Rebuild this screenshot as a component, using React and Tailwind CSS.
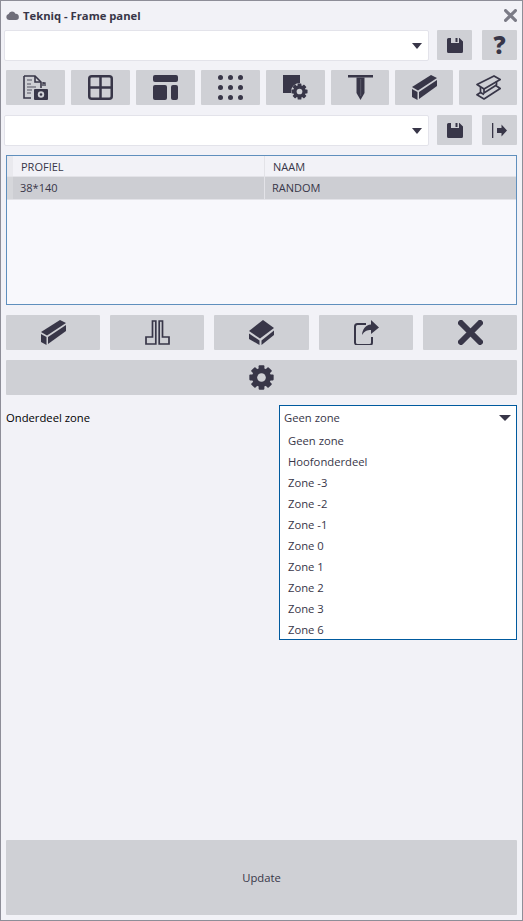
const dark = '#383648';

function Svg({ w = 25, h = 25, children }) {
  return (
    <svg width={w} height={h} viewBox={`0 0 ${w} ${h}`} className="block">
      {children}
    </svg>
  );
}

function Gear({ cx, cy, r, hole = '#cfd0d5' }) {
  const teeth = [0, 45, 90, 135];
  return (
    <g fill={dark}>
      {teeth.map((a) => (
        <rect key={a} x={cx - r * 0.28} y={cy - r * 1.18} width={r * 0.56} height={r * 2.36} rx={r * 0.08} transform={`rotate(${a} ${cx} ${cy})`} />
      ))}
      <circle cx={cx} cy={cy} r={r * 0.92} />
      <circle cx={cx} cy={cy} r={r * 0.42} fill={hole} />
    </g>
  );
}

function SaveIcon() {
  return (
    <Svg w={16} h={15}>
      <path d="M1.5 0H4V5H12V0H12.5L16 3.5V13.5A1.5 1.5 0 0 1 14.5 15H1.5A1.5 1.5 0 0 1 0 13.5V1.5A1.5 1.5 0 0 1 1.5 0Z" fill={dark} />
      <rect x="8.5" y="0" width="2" height="4" fill={dark} />
    </Svg>
  );
}

function DocIcon() {
  return (
    <Svg w={25} h={25}>
      <path d="M1 1H12L18 7V13M1 1V23H8" fill="none" stroke={dark} strokeWidth="1.6" />
      <path d="M12 1V7H18" fill="none" stroke={dark} strokeWidth="1.6" />
      <path d="M4 5H9M4 9H8M4 12H13M4 15H9M4 18H8" stroke="#7d7c88" strokeWidth="1.5" />
      <path d="M20 7V11M20 8H22V11" fill="none" stroke={dark} strokeWidth="1.3" />
      <rect x="11" y="14" width="14" height="11" rx="1" fill={dark} />
      <circle cx={18} cy={19.5} r={3.2} fill="#cfd0d5" />
      <circle cx={18} cy={19.5} r={1.3} fill={dark} />
    </Svg>
  );
}

function GridIcon() {
  return (
    <Svg w={25} h={25}>
      <rect x="1.25" y="1.25" width="22.5" height="22.5" rx="2.5" fill="none" stroke={dark} strokeWidth="2.5" />
      <path d="M12.5 1V24M1 12.5H24" stroke={dark} strokeWidth="2.5" />
    </Svg>
  );
}

function LayoutIcon() {
  return (
    <Svg w={25} h={25}>
      <rect x="0" y="0" width="25" height="7" rx="2" fill={dark} />
      <rect x="0" y="10" width="14" height="15" rx="2" fill={dark} />
      <rect x="18" y="10" width="7" height="15" rx="2" fill={dark} />
    </Svg>
  );
}

function DotsIcon() {
  const pos = [2.5, 12.5, 22.5];
  return (
    <Svg w={25} h={25}>
      {pos.map((y) => pos.map((x) => <circle key={`${x}-${y}`} cx={x} cy={y} r="2.5" fill={dark} />))}
    </Svg>
  );
}

function SquareGearIcon() {
  return (
    <Svg w={25} h={25}>
      <path d="M0 0H17V8A9 9 0 0 0 8 16V18H0Z" fill={dark} />
      <Gear cx={16.5} cy={16.5} r={6.8} />
    </Svg>
  );
}

function NailIcon() {
  return (
    <Svg w={25} h={25}>
      <rect x="0" y="0" width="25" height="2.5" fill={dark} />
      <path d="M8.5 2.5H16.5V18L12.5 25L8.5 18Z" fill={dark} />
      <path d="M12.7 4V21" stroke="#5c5b6a" strokeWidth="1" />
    </Svg>
  );
}

function BeamIcon() {
  return (
    <Svg w={25} h={25}>
      <path d="M0 12L19 0L25 3L6 15.5Z" fill={dark} />
      <path d="M7 17L25 5V11L7 24Z" fill={dark} />
      <path d="M0 14L5.5 17V25L0 22Z" fill={dark} />
    </Svg>
  );
}

function IBeamIcon() {
  return (
    <Svg w={25} h={25}>
      <path d="M1 9.5L18 0.9L24.2 4.5L8 14Z" fill="none" stroke={dark} strokeWidth="1.7" strokeLinejoin="round" />
      <path d="M4.5 12V17.5L1 19.8L8 24L24.2 13.5L20.5 11V6.5" fill="none" stroke={dark} strokeWidth="1.7" strokeLinejoin="round" />
      <path d="M8 14V18L20.5 10" fill="none" stroke={dark} strokeWidth="1.7" />
      <path d="M4.5 17.5L8 19.5" stroke={dark} strokeWidth="1.7" />
    </Svg>
  );
}

function ExportSmallIcon() {
  return (
    <Svg w={15} h={15}>
      <rect x="0" y="0" width="1.3" height="15" fill={dark} />
      <path d="M5 5H9.5V1.5L15 7.5L9.5 13.5V10H5Z" fill={dark} />
    </Svg>
  );
}

function ProfileIcon() {
  return (
    <Svg w={25} h={25}>
      <path d="M7.5 1H10.8V24H1V17H7.5Z" fill="none" stroke={dark} strokeWidth="1.7" />
      <path d="M17.5 1H14.2V24H24V17H17.5Z" fill="none" stroke={dark} strokeWidth="1.7" />
    </Svg>
  );
}

function BlockIcon() {
  return (
    <Svg w={25} h={25}>
      <path d="M0 11L14 0L25 8L11 18.5Z" fill={dark} />
      <path d="M0 13.5L10.5 20.5V25L0 19Z" fill={dark} />
      <path d="M12.5 20.5L25 10.5V15L12.5 25Z" fill={dark} />
    </Svg>
  );
}

function ShareIcon() {
  return (
    <Svg w={25} h={25}>
      <path d="M12 4H3.5A2.5 2.5 0 0 0 1 6.5V22.5A2.5 2.5 0 0 0 3.5 25H15.5A2.5 2.5 0 0 0 18 22.5V17" fill="none" stroke={dark} strokeWidth="2" />
      <path d="M17 0L25 7.5L17 14V10C13 10 10.5 11 8 15C8.5 9 11.5 5 17 4.5Z" fill={dark} />
    </Svg>
  );
}

function CrossIcon({ size = 25, color = dark, width = 6 }) {
  return (
    <svg width={size} height={size} viewBox="0 0 25 25" className="block">
      <path d="M3 3L22 22M22 3L3 22" stroke={color} strokeWidth={width} strokeLinecap="round" />
    </svg>
  );
}

function GearIcon() {
  return (
    <Svg w={25} h={25}>
      <Gear cx={12.5} cy={12.5} r={10.3} />
    </Svg>
  );
}

function Caret() {
  return <div className="w-0 h-0 border-x-[6px] border-x-transparent border-t-[6px] border-t-[#383648]" />;
}

function Btn({ className = '', children }) {
  return (
    <div className={`flex items-center justify-center bg-[#cfd0d5] rounded-[1px] ${className}`}>
      {children}
    </div>
  );
}

function Combo() {
  return (
    <div className="w-[425px] h-[31px] bg-white border border-[#e3e3ea] rounded-[2px] flex items-center justify-end pr-[6px]">
      <div className="w-0 h-0 border-x-[5px] border-x-transparent border-t-[6px] border-t-[#383648]" />
    </div>
  );
}

const toolbar = [
  [DocIcon, 'w-[59px]'],
  [GridIcon, 'w-[59px]'],
  [LayoutIcon, 'w-[59px]'],
  [DotsIcon, 'w-[59px]'],
  [SquareGearIcon, 'w-[59px]'],
  [NailIcon, 'w-[58px]'],
  [BeamIcon, 'w-[58px]'],
  [IBeamIcon, 'w-[58px]'],
];

const actions = [
  [BeamIcon, 'w-[94px]'],
  [ProfileIcon, 'w-[94px]'],
  [BlockIcon, 'w-[95px]'],
  [ShareIcon, 'w-[94px]'],
  [CrossIcon, 'w-[94px]'],
];

const zones = ['Geen zone', 'Hoofonderdeel', 'Zone -3', 'Zone -2', 'Zone -1', 'Zone 0', 'Zone 1', 'Zone 2', 'Zone 3', 'Zone 6'];

export default function App() {
  return (
    <div className="w-[523px] h-[921px] bg-[#f2f2f7] border border-[#8e8e98] flex flex-col text-[11.25px] text-[#383648] font-['Open_Sans',sans-serif] overflow-hidden">
      {/* Titel */}
      <div className="h-[29px] shrink-0 flex items-center pl-[5px] pr-[5px]">
        <svg width="13" height="9" viewBox="0 0 13 9" className="block mr-[4px]">
          <path d="M3 9A3 3 0 0 1 2.6 3.1A3.6 3.6 0 0 1 9.4 2.8A3.1 3.1 0 0 1 10 9Z" fill="#6f6e7a" />
        </svg>
        <span className="font-bold text-[11.25px] leading-none">Tekniq - Frame panel</span>
        <div className="ml-auto"><CrossIcon size={13} color="#7b7b86" width={6} /></div>
      </div>

      <div className="flex pl-[3px] h-[31px] shrink-0">
        <Combo />
        <Btn className="w-[35px] h-[30px] ml-[8px]"><SaveIcon /></Btn>
        <Btn className="w-[35px] h-[30px] ml-[10px] text-[24px] font-extrabold leading-none">?</Btn>
      </div>

      <div className="flex gap-[6px] mt-[9px] pl-[5px] shrink-0">
        {toolbar.map(([Icon, w], i) => (
          <Btn key={i} className={`${w} h-[35px]`}><Icon /></Btn>
        ))}
      </div>

      <div className="flex pl-[3px] h-[31px] mt-[10px] shrink-0">
        <Combo />
        <Btn className="w-[35px] h-[30px] ml-[8px]"><SaveIcon /></Btn>
        <Btn className="w-[35px] h-[30px] ml-[10px]"><ExportSmallIcon /></Btn>
      </div>

      {/* Tabel */}
      <div className="ml-[5px] mt-[9px] w-[511px] h-[150px] shrink-0 border border-[#5f8fbd] bg-[#f8f8fc]">
        <div className="flex h-[21px] bg-[#f2f2f7] border-b border-[#e3e3e8] leading-[21px] text-[11px]">
          <div className="w-[6px] bg-[#e9e9ee]" />
          <div className="w-[252px] pl-[8px] border-r border-[#e3e3e8]">PROFIEL</div>
          <div className="pl-[8px]">NAAM</div>
        </div>
        <div className="flex h-[23px] bg-[#cdced3] border-b border-[#e3e3e8] leading-[22px] text-[11px]">
          <div className="w-[6px] bg-[#d6d7db]" />
          <div className="w-[252px] pl-[7px] border-r border-[#e3e3e8]">38*140</div>
          <div className="pl-[7px]">RANDOM</div>
        </div>
      </div>

      <div className="flex gap-[10px] mt-[10px] pl-[5px] shrink-0">
        {actions.map(([Icon, w], i) => (
          <Btn key={i} className={`${w} h-[35px]`}><Icon /></Btn>
        ))}
      </div>

      <Btn className="w-[511px] h-[35px] ml-[5px] mt-[10px] shrink-0"><GearIcon /></Btn>

      {/* Zone */}
      <div className="flex mt-[10px] pl-[5px] shrink-0">
        <div className="w-[273px] h-[26px] leading-[26px] text-black">Onderdeel zone</div>
        <div className="w-[238px] h-[235px] bg-white border border-[#005a9e]">
          <div className="h-[24px] flex items-center justify-between pl-[4px] pr-[5px]">
            <span>Geen zone</span>
            <Caret />
          </div>
          {zones.map((z) => (
            <div key={z} className="h-[21px] leading-[21px] pl-[8px]">{z}</div>
          ))}
        </div>
      </div>

      <div className="flex-1" />

      <Btn className="w-[511px] h-[75px] ml-[5px] mb-[5px] pt-[2px] shrink-0">Update</Btn>
    </div>
  );
}
